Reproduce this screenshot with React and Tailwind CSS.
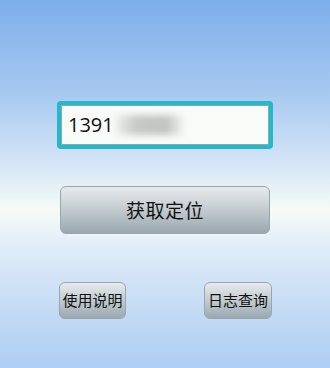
export default function App() {
  const cjk = { fontFamily: '"Noto Sans CJK SC", "Noto Sans", sans-serif' };
  return (
    <div className="w-[330px] h-[368px] flex flex-col bg-[linear-gradient(to_bottom,#7daeea_0%,#a6c8f0_25%,#d6e6f7_45%,#f5fbf6_57%,#dfebf8_68%,#c3daf4_85%,#adcdf2_100%)]" style={{ fontFamily: '"Noto Sans", sans-serif' }}>
      <div className="h-[101px]" />
      <div className="mx-[57px] w-[216px] h-[48px] rounded-[4px] bg-[#22b9cd] p-[4px]">
        <div className="h-full bg-[#f8fbf8] border border-[#8fa8aa] flex items-center pl-[6px]">
          <span className="text-[20px] text-[#111] leading-none" style={{ fontFamily: '"Open Sans", "Noto Sans", sans-serif' }}>1391</span>
          <div className="ml-[2px] w-[68px] h-[20px] bg-[linear-gradient(to_right,#eceeec,#c7c9c7_30%,#c3c5c3_75%,#f3f5f3)] blur-[3px]" />
        </div>
      </div>
      <div className="h-[37px]" />
      <div className="mx-[60px] w-[210px] h-[48px] rounded-[6px] border border-[#9aa6ad] bg-[linear-gradient(to_bottom,#e6eaec,#c6ced2_45%,#9aa8b0)] flex items-center justify-center">
        <span className="text-[19px] text-[#111] tracking-[0.5px]" style={cjk}>获取定位</span>
      </div>
      <div className="h-[48px]" />
      <div className="flex justify-between mx-[59px] w-[213px]">
        <div className="w-[67px] h-[37px] rounded-[6px] border border-[#9aa6ad] bg-[linear-gradient(to_bottom,#e6eaec,#c6ced2_45%,#9aa8b0)] flex items-center justify-center">
          <span className="text-[15px] text-[#111]" style={cjk}>使用说明</span>
        </div>
        <div className="w-[68px] h-[37px] rounded-[6px] border border-[#9aa6ad] bg-[linear-gradient(to_bottom,#e6eaec,#c6ced2_45%,#9aa8b0)] flex items-center justify-center">
          <span className="text-[15px] text-[#111]" style={cjk}>日志查询</span>
        </div>
      </div>
    </div>
  );
}
